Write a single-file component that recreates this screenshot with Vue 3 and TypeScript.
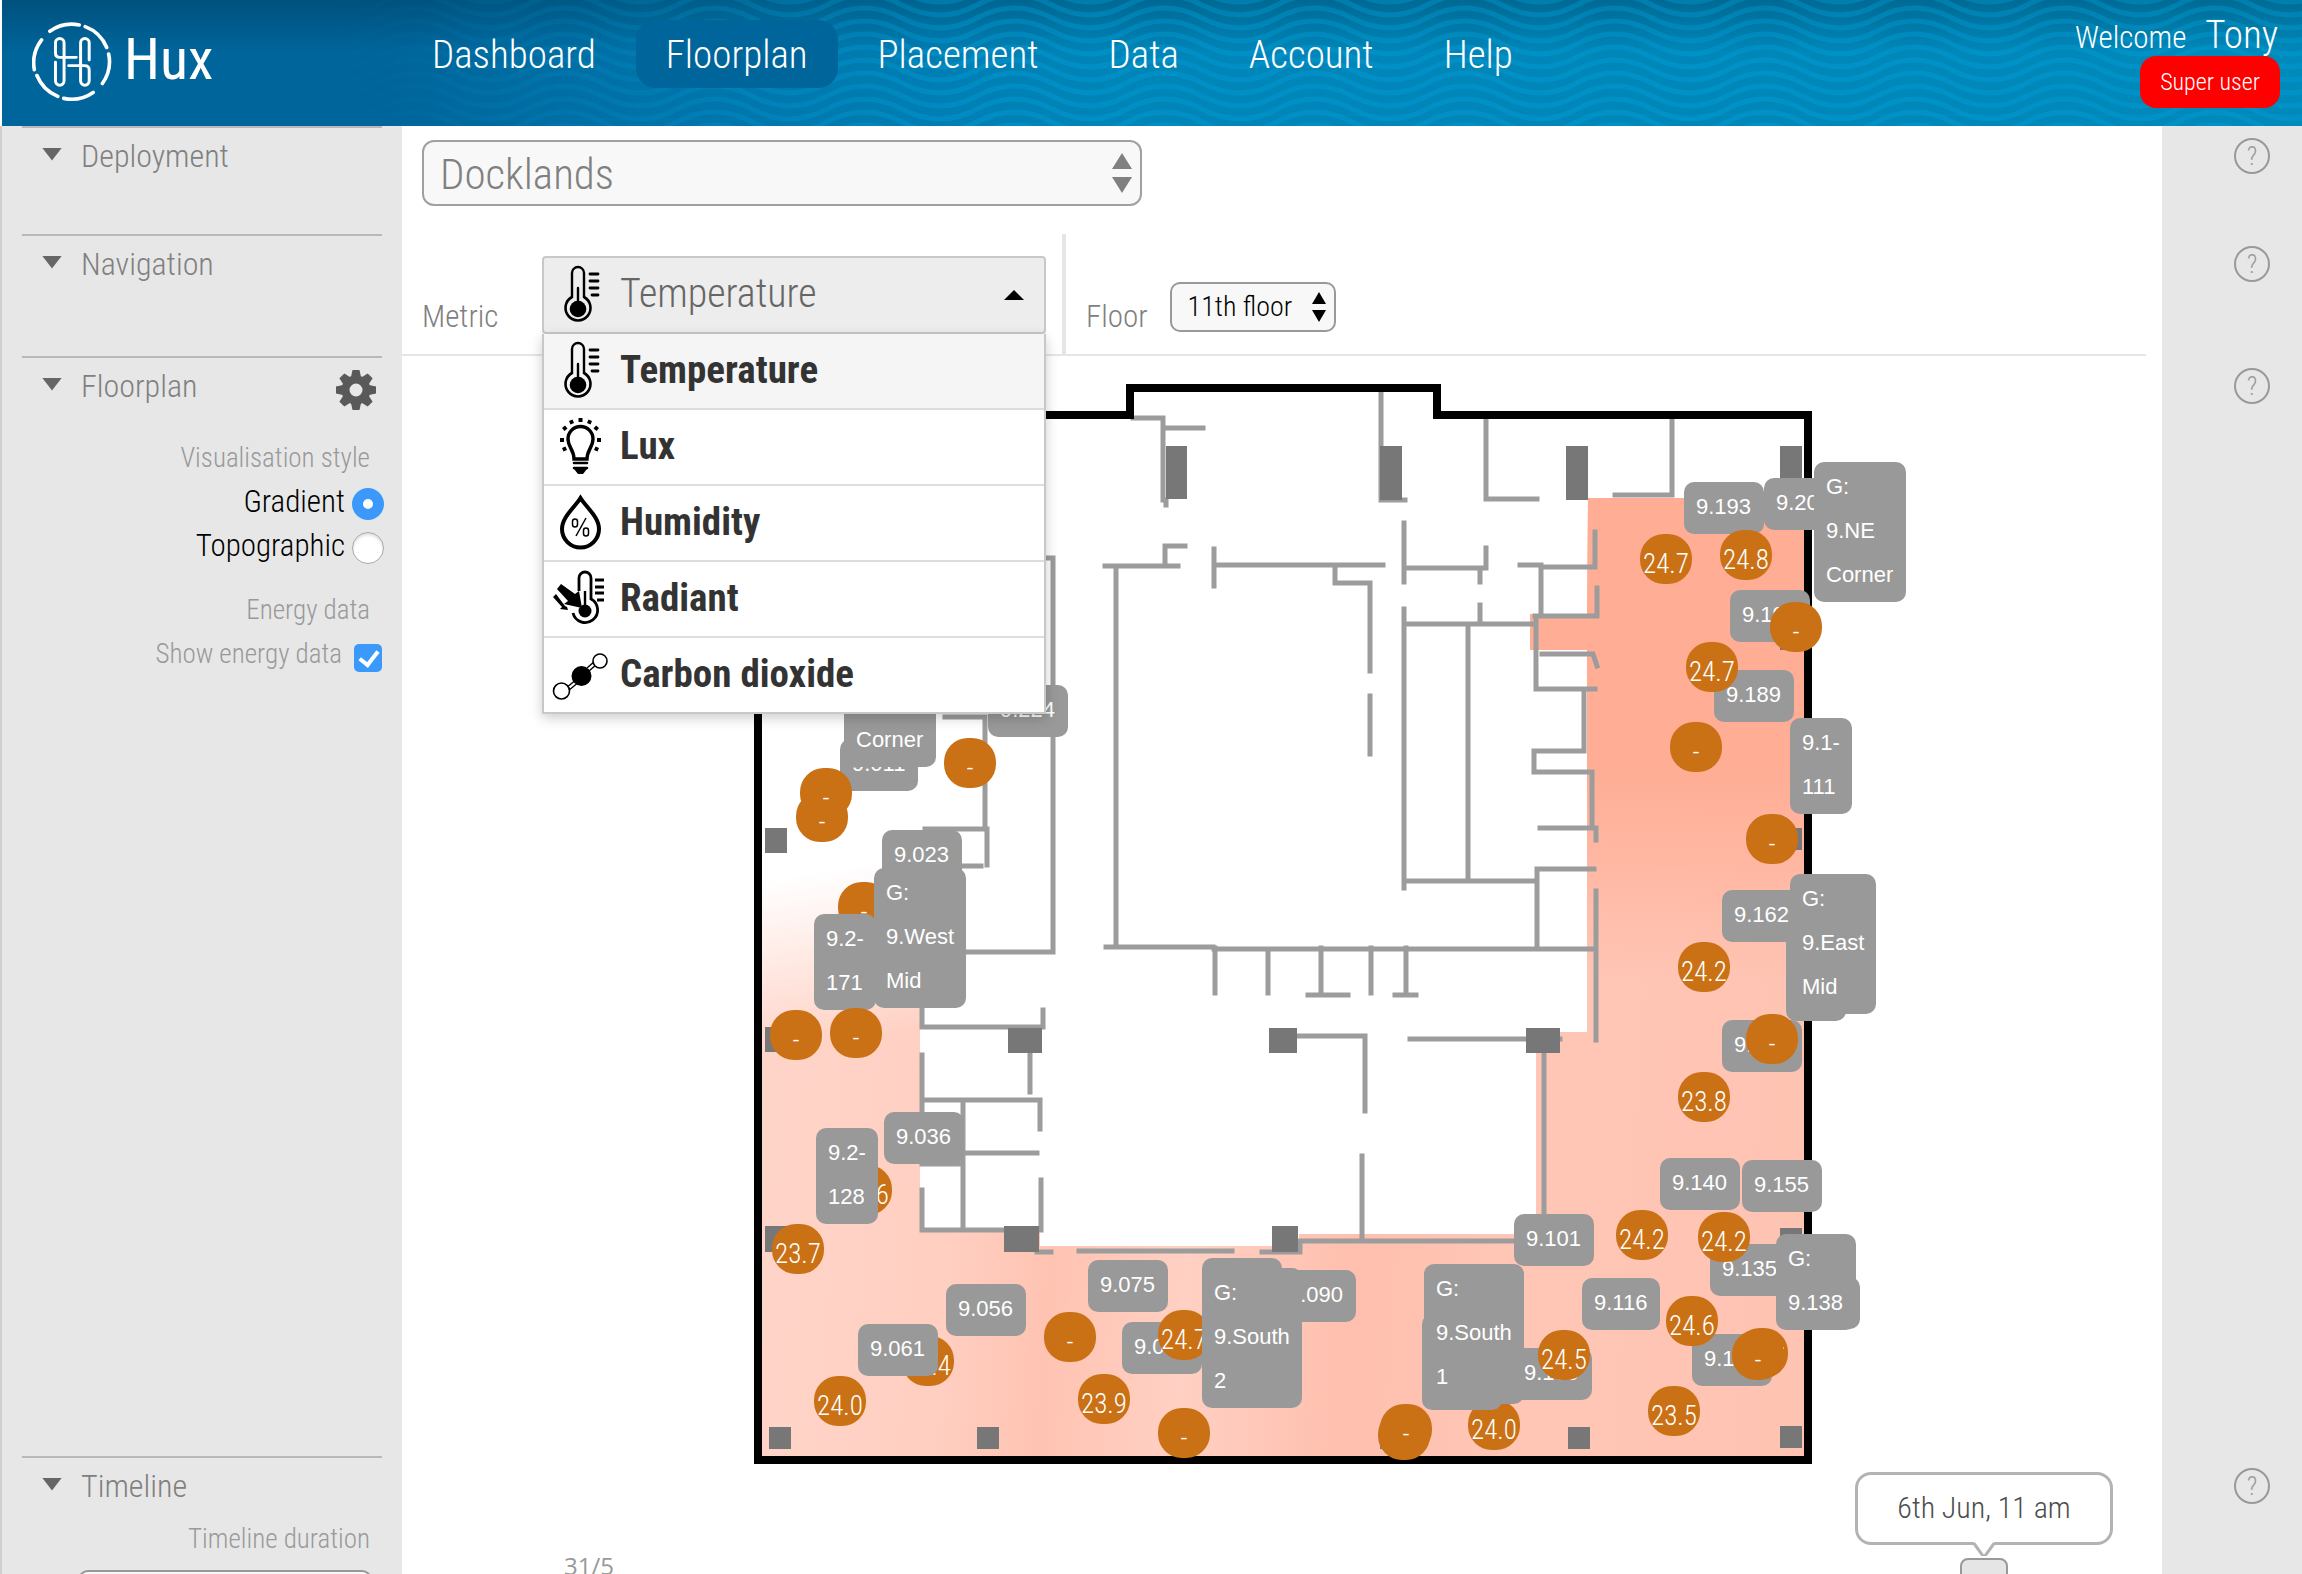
<script setup lang="ts">
import { ref } from 'vue'

interface Pin { kind: 'room' | 'sensor'; x: number; y: number; w?: number; h?: number; lines: string[] }

const navItems = ['Dashboard', 'Floorplan', 'Placement', 'Data', 'Account', 'Help']
const current = 'Floorplan'
const metrics = [
  { id: 'temperature', name: 'Temperature' },
  { id: 'lux', name: 'Lux' },
  { id: 'humidity', name: 'Humidity' },
  { id: 'radiant', name: 'Radiant' },
  { id: 'co2', name: 'Carbon dioxide' },
]
const metric = ref('temperature')
const visStyle = ref('gradient')
const showEnergy = ref(true)
const waves = Array.from({ length: 12 }, (_, i) => i * 13 - 8)

const room = (x: number, y: number, w: number, ...lines: string[]): Pin => ({
  kind: 'room', x, y, w, h: Math.max(1, lines.length) * 44 + 8, lines,
})
const sensor = (x: number, y: number, value: string): Pin => ({ kind: 'sensor', x, y, lines: [value] })

// Painted in order: later pins lie over earlier ones.
const pins: Pin[] = [
  room(1684, 482, 80, '9.193'),
  room(1764, 478, 80, '9.200'),
  room(1814, 462, 92, 'G:', '9.NE', 'Corner'),
  room(1730, 590, 80, '9.190'),
  room(1714, 670, 80, '9.189'),
  room(1790, 718, 62, '9.1-', '111'),
  room(1722, 890, 80, '9.162'),
  room(1786, 925, 60, '', ''),
  room(1790, 874, 86, 'G:', '9.East', 'Mid'),
  room(1722, 1020, 80, '9.157'),
  room(1660, 1158, 80, '9.140'),
  room(1742, 1160, 80, '9.155'),
  room(1514, 1214, 80, '9.101'),
  room(1710, 1244, 80, '9.135'),
  room(1780, 1277, 80),
  room(1776, 1234, 80, 'G:', '9.138'),
  room(1582, 1278, 78, '9.116'),
  room(1692, 1334, 80, '9.127'),
  room(1512, 1348, 80, '9.109'),
  sensor(1468, 1400, '24.0'),
  room(1422, 1314, 80, '', ''),
  room(1424, 1264, 100, 'G:', '9.South', '1'),
  room(1276, 1270, 80, '9.090'),
  room(1088, 1260, 80, '9.075'),
  room(1122, 1322, 80, '9.080'),
  sensor(1158, 1310, '24.7'),
  room(1202, 1258, 80),
  room(1220, 1268, 82),
  room(1202, 1268, 100, 'G:', '9.South', '2'),
  room(988, 685, 80, '9.224'),
  room(840, 739, 78, '9.011'),
  room(844, 627, 92, 'G:', '9.NW', 'Corner'),
  room(882, 830, 80, '9.023'),
  sensor(838, 882, '-'),
  room(814, 914, 62, '9.2-', '171'),
  room(874, 868, 92, 'G:', '9.West', 'Mid'),
  room(884, 1112, 80, '9.036'),
  sensor(840, 1165, '23.6'),
  room(816, 1128, 62, '9.2-', '128'),
  room(946, 1284, 80, '9.056'),
  sensor(902, 1336, '24.4'),
  room(858, 1324, 80, '9.061'),
  sensor(1640, 534, '24.7'),
  sensor(1720, 530, '24.8'),
  sensor(1770, 602, '-'),
  sensor(1686, 642, '24.7'),
  sensor(1670, 722, '-'),
  sensor(1746, 814, '-'),
  sensor(1678, 942, '24.2'),
  sensor(1746, 1014, '-'),
  sensor(1678, 1072, '23.8'),
  sensor(1616, 1210, '24.2'),
  sensor(1698, 1212, '24.2'),
  sensor(1666, 1296, '24.6'),
  sensor(1736, 1328, '24.7'),
  sensor(1732, 1330, '-'),
  sensor(1648, 1386, '23.5'),
  sensor(1538, 1330, '24.5'),
  sensor(1378, 1410, ''),
  sensor(1380, 1404, '-'),
  sensor(1158, 1408, '-'),
  sensor(1078, 1374, '23.9'),
  sensor(1044, 1312, '-'),
  sensor(814, 1376, '24.0'),
  sensor(772, 1224, '23.7'),
  sensor(770, 1010, '-'),
  sensor(830, 1008, '-'),
  sensor(796, 792, '-'),
  sensor(800, 768, '-'),
  sensor(944, 738, '-'),
]

const originX = 652
const originY = 356
const pinStyle = (p: Pin) => ({
  left: `${p.x - originX}px`,
  top: `${p.y - originY}px`,
  ...(p.w ? { width: `${p.w}px`, height: `${p.h}px` } : {}),
})

const walls = [
  'M1133 418H1163V500H1166V505', 'M1163 428H1203', 'M1381 390V500H1405', 'M1486 415V499H1537',
  'M1672 416V495H1615', 'M1185 546H1165V564', 'M1105 566H1178', 'M1116 566V946', 'M1106 947H1213',
  'M1214 949H1595', 'M1214 549V586', 'M1214 565H1383', 'M1335 566V583H1370V671', 'M1370 696V754',
  'M1404 523V582', 'M1404 568H1486V548', 'M1480 568V582', 'M1480 605V624', 'M1404 609V888',
  'M1404 624H1531', 'M1468 624V881', 'M1404 881H1536', 'M1215 948V993', 'M1268 951V993',
  'M1321 948V995', 'M1308 995H1348', 'M1371 948V993', 'M1406 948V995', 'M1395 995H1416',
  'M1046 558H1053V952H960', 'M945 717H985V829', 'M925 829H987V865', 'M960 866H981',
  'M922 1009V1027H1043V1010', 'M1030 1053V1092', 'M922 1055V1164H963', 'M922 1100H1040V1129',
  'M963 1100V1230', 'M963 1153H1037', 'M922 1190V1230', 'M922 1230H1006', 'M1041 1180V1230',
  'M1037 1252H1051', 'M1079 1251H1232', 'M1297 1036H1365V1111', 'M1362 1156V1239',
  'M1410 1039H1560', 'M1544 1053V1240', 'M1300 1252V1241H1544', 'M1262 1252H1300', 'M1596 891V1040',
  'M1595 532V567H1541', 'M1520 565H1541V616', 'M1597 588V616H1535', 'M1536 616V689H1595',
  'M1542 654H1593L1597 666', 'M1584 689V751H1534V772H1592V828', 'M1540 828H1596V840',
  'M1594 869H1537V947',
].join('')

const columns = [
  [1166, 446, 21, 53], [1380, 446, 22, 54], [1566, 446, 22, 54], [1780, 446, 22, 54],
  [1780, 630, 22, 20], [1780, 828, 22, 22], [765, 828, 22, 25], [765, 1027, 22, 25],
  [765, 1226, 22, 26], [769, 1427, 22, 22], [977, 1427, 22, 22], [1380, 1427, 22, 22],
  [1568, 1427, 22, 22], [1780, 1426, 22, 22], [1780, 1228, 22, 25], [1008, 1028, 34, 25],
  [1004, 1226, 35, 26], [1269, 1028, 28, 25], [1526, 1028, 34, 25], [1272, 1226, 26, 26],
]
const helpTopics = ['Deployment', 'Navigation', 'Floorplan', 'Timeline']
</script>

<template>
  <div class="app">
    <svg class="defs" aria-hidden="true">
      <defs>
        <symbol id="ic-temperature" viewBox="0 0 60 60">
          <path d="M20 33V8a6 6 0 0 1 12 0V33" fill="none" stroke="#000" stroke-width="2.4" />
          <path d="M20 32a12.5 12.5 0 1 0 12 0" fill="none" stroke="#000" stroke-width="2.6" />
          <circle cx="26" cy="44" r="8.3" /><path d="M26 44V23" stroke="#000" stroke-width="2.4" stroke-linecap="round" />
          <path d="M38 9h8M38 16h8M38 23h8M40 30h6" stroke="#000" stroke-width="2.8" stroke-linecap="round" />
        </symbol>
        <symbol id="ic-lux" viewBox="0 0 60 60">
          <path d="M22 42c0-9-6-12-6-20a12.500 12.500 0 0 1 25 0c0 8-6 11-6 20z" fill="none" stroke="#000" stroke-width="3.4" />
          <path d="M22 46h13M22 51h13" stroke="#000" stroke-width="2.600" stroke-linecap="round" />
          <path d="M22 52h13l-4 5h-5z" />
          <path d="M26.500 1h4v4h-4zM8 21h4v4H8zM45 21h4v4h-4z" />
          <path d="M17 4l3.500-1.500 1.500 3.500-3.500 1.500zM40 4l-3.500-1.500L35 6l3.500 1.500zM10 11l3-2.500 2.500 3-3 2.500zM47 11l-3-2.500-2.500 3 3 2.500zM10 31l3.500-1.500L15 33l-3.500 1.500zM47 31l-3.500-1.500L42 33l3.500 1.500z" />
        </symbol>
        <symbol id="ic-humidity" viewBox="0 0 60 60">
          <path d="M28.500 5C23 14 10 24 10 36a18.500 18.500 0 0 0 37 0C47 24 34 14 28.500 5z" fill="none" stroke="#000" stroke-width="4" />
          <path d="M34 25L24 43" stroke="#000" stroke-width="1.500" />
          <rect x="20.500" y="26" width="5" height="8" rx="2.500" fill="none" stroke="#000" stroke-width="1.500" />
          <rect x="31.500" y="35" width="5" height="8" rx="2.500" fill="none" stroke="#000" stroke-width="1.500" />
        </symbol>
        <symbol id="ic-radiant" viewBox="0 0 60 60">
          <path d="M27 22V9a6 6 0 0 1 12 0V31" fill="none" stroke="#000" stroke-width="2.800" />
          <path d="M39 30a12.500 12.500 0 1 1-18 14" fill="none" stroke="#000" stroke-width="2.800" />
          <circle cx="33" cy="42" r="6.500" /><path d="M33 42V22" stroke="#000" stroke-width="2.400" />
          <path d="M43 11h9M43 18h9M43 24h9M45 31h7" stroke="#000" stroke-width="2.800" />
          <path d="M9 15l-4 5 11 12-4 3 18 4-3-17-4 3z" />
          <path d="M4 25l-3 3 9 10-2 2 8 1-1-3-2-1z" />
        </symbol>
        <symbol id="ic-co2" viewBox="0 0 60 60">
          <path d="M14 43l11-9M16 46l12-10M35 23l8-7M37 26l8-7" stroke="#000" stroke-width="1.400" />
          <circle cx="29.500" cy="31" r="10" />
          <circle cx="9.500" cy="46" r="8" fill="#fff" stroke="#000" stroke-width="1.600" />
          <circle cx="48" cy="16" r="7" fill="#fff" stroke="#000" stroke-width="1.600" />
        </symbol>
      </defs>
    </svg>

    <header class="top">
      <svg class="waves" aria-hidden="true">
        <defs>
          <linearGradient id="fade"><stop offset="0.14" stop-color="#000" /><stop offset="0.42" stop-color="#fff" /></linearGradient>
          <mask id="fade-mask"><rect width="100%" height="100%" fill="url(#fade)" /></mask>
          <pattern id="wave" width="150" height="126" patternUnits="userSpaceOnUse">
            <path v-for="y in waves" :key="y" :d="`M-75 ${y}q37 -20 75 0t75 0t75 0t75 0`" />
          </pattern>
        </defs>
        <rect width="100%" height="100%" fill="url(#wave)" mask="url(#fade-mask)" />
      </svg>
      <a class="brand" href="#" aria-label="Hux home">
        <svg viewBox="36 36 242 242" fill="none" stroke="#fff" stroke-linecap="round" aria-hidden="true">
          <g stroke-width="11">
            <path d="M90 64A114 114 0 0 1 179 45M197 50A114 114 0 0 1 262 113M268 133A114 114 0 0 1 249 222M221 249A114 114 0 0 1 132 267M114 261A114 114 0 0 1 51 198M43 180A114 114 0 0 1 65 90" />
          </g>
          <g stroke-width="9">
            <path d="M170 143H120Q107 143 107 130V99a13 13 0 0 1 26 0V214a13 13 0 0 1-26 0V158" />
            <path d="M147 168H195Q209 168 209 181V214a13 13 0 0 1-26 0V99a13 13 0 0 1 26 0V151" />
          </g>
        </svg>
        <span>Hux</span>
      </a>
      <nav class="nav">
        <a v-for="n in navItems" :key="n" href="#" :class="{ on: n === current }">{{ n }}</a>
      </nav>
      <div class="user">
        <p>Welcome <a href="#">Tony</a></p>
        <span class="role">Super user</span>
      </div>
    </header>

    <div class="body">
      <aside class="side">
        <section class="short">
          <h2><i class="tri" />Deployment</h2>
        </section>
        <section class="mid">
          <h2><i class="tri" />Navigation</h2>
        </section>
        <section class="grow">
          <h2><i class="tri" />Floorplan
            <button class="gear" type="button" aria-label="Floorplan settings">
              <svg viewBox="-20 -20 40 40" aria-hidden="true">
                <circle r="10.500" fill="none" stroke="#595959" stroke-width="8" />
                <path v-for="a in 8" :key="a" :transform="`rotate(${a * 45})`" d="M-5-13L-3.500-20H3.500L5-13z" fill="#595959" />
              </svg>
            </button>
          </h2>
          <fieldset>
            <legend class="cap">Visualisation style</legend>
            <label class="opt">Gradient<input v-model="visStyle" type="radio" name="vis" value="gradient"></label>
            <label class="opt">Topographic<input v-model="visStyle" type="radio" name="vis" value="topographic"></label>
          </fieldset>
          <p class="cap energy">Energy data</p>
          <label class="opt check">Show energy data<input v-model="showEnergy" type="checkbox"></label>
        </section>
        <section class="last">
          <h2><i class="tri" />Timeline</h2>
          <label class="cap" for="duration">Timeline duration</label>
          <select id="duration" class="duration"><option /></select>
        </section>
      </aside>

      <main class="main">
        <div class="site">
          <select aria-label="Site"><option>Docklands</option></select>
          <svg class="updown" viewBox="0 0 20 40" aria-hidden="true"><path d="M10 0L20 16H0zM10 40L20 24H0z" /></svg>
        </div>

        <div class="filters">
          <div class="metric">
            <span id="metric-label" class="lbl">Metric</span>
            <div class="drop">
              <button class="trigger" type="button" aria-haspopup="listbox" aria-expanded="true" aria-labelledby="metric-label">
                <svg class="ic" aria-hidden="true"><use href="#ic-temperature" /></svg><span>Temperature</span><i class="caret" />
              </button>
              <ul class="menu" role="listbox" aria-labelledby="metric-label">
                <li v-for="m in metrics" :key="m.id" role="option" :aria-selected="m.id === metric" :class="{ on: m.id === metric }" @click="metric = m.id">
                  <svg class="ic" aria-hidden="true"><use :href="`#ic-${m.id}`" /></svg><span>{{ m.name }}</span>
                </li>
              </ul>
            </div>
          </div>
          <div class="floor">
            <label class="lbl" for="floor">Floor</label>
            <div class="pick">
              <select id="floor"><option>11th floor</option></select>
              <svg class="updown" viewBox="0 0 14 30" aria-hidden="true"><path d="M7 0L14 12H0zM7 30L14 18H0z" /></svg>
            </div>
          </div>
        </div>

        <div class="stage">
          <div class="plan">
            <svg viewBox="652 356 1260 1116" aria-label="11th floor plan" role="img">
              <defs>
                <linearGradient id="base" gradientUnits="userSpaceOnUse" x1="762" y1="1200" x2="1804" y2="1270">
                  <stop offset="0" stop-color="#ffd4c8" /><stop offset="0.18" stop-color="#ffcfc1" />
                  <stop offset="0.28" stop-color="#ffc3b2" /><stop offset="0.41" stop-color="#ffd0c3" />
                  <stop offset="0.57" stop-color="#ffbfae" /><stop offset="0.72" stop-color="#ffc6b6" />
                  <stop offset="1" stop-color="#ffc3b2" />
                </linearGradient>
                <linearGradient id="warm" x1="0" y1="0" x2="0" y2="1">
                  <stop offset="0" stop-color="#ffad95" /><stop offset="0.56" stop-color="#ffad95" />
                  <stop offset="1" stop-color="#ffad95" stop-opacity="0" />
                </linearGradient>
                <linearGradient id="cool" gradientUnits="userSpaceOnUse" x1="830" y1="870" x2="855" y2="1040">
                  <stop offset="0" stop-color="#fff" /><stop offset="1" stop-color="#fff" stop-opacity="0" />
                </linearGradient>
              </defs>
              <path d="M1588 498H1804V1456H762V840H920V1228H1040V1246H1299V1234H1536V1032H1587V650H1530V614H1587z" fill="url(#base)" />
              <path d="M1588 498H1804V980H1587V650H1530V614H1587z" fill="url(#warm)" />
              <path d="M762 840H921V1050H762z" fill="url(#cool)" />
              <path :d="walls" fill="none" stroke="#9c9c9c" stroke-width="5" stroke-linecap="square" />
              <rect v-for="(c, i) in columns" :key="i" :x="c[0]" :y="c[1]" :width="c[2]" :height="c[3]" fill="#777" />
              <path d="M758 415H1130V388H1437V415H1808V1460H758z" fill="none" stroke="#000" stroke-width="8" />
            </svg>
            <div v-for="(p, i) in pins" :key="i" :class="p.kind" :style="pinStyle(p)">
              <span v-for="(l, j) in p.lines" :key="j">{{ l }}</span>
            </div>
          </div>
        </div>

        <div class="timeline">
          <span class="tick">31/5</span>
          <div class="marker">
            <output>6th Jun, 11 am</output>
            <svg viewBox="0 0 26 14" aria-hidden="true"><path d="M3 0L13 14L23 0z" fill="#fff" /><path d="M3 1.500L12 14H14L23 1.500" fill="none" stroke="#b3b3b3" stroke-width="3" /></svg>
            <button type="button" aria-label="Timeline position" />
          </div>
        </div>
      </main>

      <aside class="rail">
        <div v-for="h in helpTopics" :key="h" :class="h.toLowerCase()">
          <button type="button" :aria-label="`Help: ${h}`">?</button>
        </div>
      </aside>
    </div>
  </div>
</template>

<style>
body { margin: 0; }
</style>

<style scoped>
* { box-sizing: border-box; }
.app { height: 100vh; min-height: 900px; overflow: hidden; display: flex; flex-direction: column; background: #fff; font: 300 30px/40px "Roboto Condensed", Roboto, sans-serif; color: #808080; }
h2, p, ul, fieldset, legend { margin: 0; padding: 0; border: 0; font: inherit; list-style: none; }
button, select, input { font: inherit; margin: 0; }
a { color: inherit; text-decoration: none; }
.defs { position: absolute; width: 0; height: 0; }

.top { position: relative; flex: none; height: 126px; display: flex; margin-left: 2px; color: #fff; background: linear-gradient(rgba(0, 30, 50, .28), rgba(0, 30, 50, 0) 42%), linear-gradient(90deg, #00659b 17%, #0073a9 28%, #0085b9 48%, #0089bb); }
.waves { position: absolute; inset: 0; width: 100%; height: 100%; }
.waves path { fill: none; stroke: #00a3dc; stroke-width: 5; stroke-opacity: .35; }
.brand, .nav, .user { position: relative; }
.brand { width: 400px; flex: none; padding: 22px 0 0 30px; display: flex; gap: 12px; }
.brand svg { width: 80px; height: 80px; }
.brand span { font-size: 58px; line-height: 74px; font-weight: 400; }
.nav { display: flex; gap: 10px; padding-top: 20px; font-size: 39px; }
.nav a { height: 68px; padding: 0 30px; line-height: 70px; border-radius: 20px; }
.nav .on { background: #00659b; }
.user { margin-left: auto; padding: 10px 22px 0 0; display: flex; flex-direction: column; align-items: flex-end; }
.user p { height: 46px; line-height: 50px; padding-right: 2px; font-size: 31px; }
.user p a { font-size: 39px; margin-left: 12px; }
.role { height: 52px; line-height: 52px; padding: 0 20px; font-size: 24px; background: #f00; border-radius: 16px; }

.body { flex: 1; min-height: 0; display: flex; }
.side { width: 402px; flex: none; display: flex; flex-direction: column; background: #e7e7e7; border-left: 2px solid #cfcfcf; padding: 0 20px; }
.side section { border-top: 2px solid #b9b9b9; position: relative; flex: none; }
.side .short { min-height: 108px; }
.side .mid { min-height: 122px; }
.side .grow { flex: 1; }
.side .last { height: 118px; overflow: hidden; text-align: right; }
h2 { display: flex; align-items: center; height: 40px; margin-top: 8px; font-size: 32px; }
.tri { width: 20px; height: 13px; margin: 0 19px 4px 20px; background: #666; clip-path: polygon(0 0, 100% 0, 50% 100%); }
.gear { margin: 8px 6px 0 auto; width: 40px; height: 40px; padding: 0; border: 0; background: none; }
.gear svg { display: block; width: 40px; height: 40px; }
.cap { display: block; width: 100%; padding-right: 12px; text-align: right; font-size: 27px; color: #999; }
fieldset { padding-top: 32px; min-width: 0; }
fieldset legend { float: left; margin-bottom: 2px; }
.opt { clear: both; display: flex; align-items: center; justify-content: flex-end; gap: 7px; height: 44px; margin-right: -2px; font-size: 31px; color: #000; }
.opt input { appearance: none; width: 32px; height: 32px; border-radius: 50%; background: #fff; border: 1px solid #aaa; box-shadow: inset 0 2px 3px rgba(0, 0, 0, .15); margin-top: 4px; }
.opt input[type="radio"]:checked { border: 11px solid #3b99fc; box-shadow: none; }
.energy { margin-top: 22px; }
.check { gap: 12px; margin: 4px 0 0; height: 40px; font-size: 27px; color: #999; }
.check input { width: 28px; height: 28px; border-radius: 5px; border: 0; margin-top: 8px; box-shadow: none; }
.check input:checked { background: #3b99fc; position: relative; }
.check input:checked::after { content: ""; position: absolute; left: 9px; top: 3px; width: 8px; height: 15px; border: solid #fff; border-width: 0 4px 4px 0; transform: rotate(38deg); }
.last .cap { margin-top: 13px; }
.duration { appearance: none; width: 294px; height: 48px; margin: 11px 10px 0 0; border: 2px solid #999; border-radius: 10px; background: #f8f8f8; }

.main { flex: 1; min-width: 0; display: flex; flex-direction: column; }
.site { position: relative; width: 720px; height: 66px; margin: 14px 0 28px 20px; }
.site select { appearance: none; width: 100%; height: 100%; padding: 2px 16px 0; border: 2px solid #a0a0a0; border-radius: 12px; background: #f8f8f8; color: #808080; font-size: 43px; }
.updown { position: absolute; pointer-events: none; }
.site .updown { right: 10px; top: 13px; width: 20px; height: 40px; fill: #808080; }
.filters { display: flex; height: 122px; margin-right: 16px; border-bottom: 2px solid #e5e5e5; }
.metric { display: flex; width: 664px; border-right: 4px solid #e5e5e5; padding-left: 20px; }
.lbl { line-height: 40px; padding-top: 63px; height: 103px; font-size: 31px; }
.metric .lbl { width: 120px; }
.drop { position: relative; width: 504px; margin-top: 22px; z-index: 5; font-size: 39px; }
.drop span { padding-bottom: 3px; }
.trigger { display: flex; align-items: center; width: 100%; height: 78px; padding: 0 20px 0 8px; border: 2px solid #c8c8c8; border-radius: 4px; background: #ededed; color: #666; text-align: left; font-size: 40px; }
.ic { width: 60px; height: 60px; margin-right: 8px; flex: none; }
.caret { margin-left: auto; width: 20px; height: 10px; background: #000; clip-path: polygon(0 100%, 50% 0, 100% 100%); }
.menu { position: absolute; top: 78px; left: 0; width: 100%; background: #fff; border: 2px solid #c8c8c8; border-top: 0; box-shadow: 0 4px 12px rgba(0, 0, 0, .2); font-size: 39px; font-weight: 700; color: #333; }
.menu li { display: flex; align-items: center; height: 76px; padding-left: 8px; border-bottom: 2px solid #ddd; }
.menu li:last-child { height: 74px; border-bottom: 0; }
.menu .on { background: #f5f5f5; }
.floor { display: flex; padding-left: 20px; gap: 22px; }
.pick { position: relative; width: 166px; height: 50px; margin-top: 48px; }
.pick select { appearance: none; width: 100%; height: 100%; padding: 0 16px; border: 2px solid #999; border-radius: 10px; background: #f8f8f8; color: #000; font-size: 28px; }
.pick .updown { right: 10px; top: 10px; width: 14px; height: 30px; fill: #000; }

.stage { flex: 1; min-height: 0; display: flex; justify-content: center; }
.plan { position: relative; width: 1260px; height: 1116px; flex: none; }
.plan > svg { display: block; width: 100%; height: 100%; }
.room, .sensor { position: absolute; color: #fff; }
.room { padding: 3px 12px; border-radius: 10px; background: #999; font: 22px/44px "Liberation Sans", Arial, sans-serif; }
.room span { display: block; white-space: nowrap; }
.sensor { width: 52px; height: 50px; border-radius: 24px; background: #ca7116; text-align: center; font-size: 27px; line-height: 61px; font-weight: 300; }

.timeline { flex: none; height: 102px; display: flex; justify-content: space-between; padding: 0 49px 0 162px; overflow: hidden; }
.tick { padding-top: 78px; font: 24px/32px "Open Sans", sans-serif; color: #999; }
.marker { display: flex; flex-direction: column; align-items: center; width: 258px; }
.marker output { flex: none; width: 100%; height: 73px; line-height: 66px; border: 3px solid #b3b3b3; border-radius: 16px; text-align: center; font-size: 30px; color: #4d4d4d; }
.marker svg { flex: none; width: 26px; height: 14px; margin-top: -3px; position: relative; }
.marker button { width: 48px; height: 40px; margin-top: 2px; flex: none; border: 2px solid #999; border-radius: 8px; background: #e5e5e5; }

.rail { width: 140px; flex: none; display: flex; flex-direction: column; background: #e7e7e7; }
.rail div { padding: 12px 0 0 72px; flex: none; height: 108px; }
.rail .navigation { height: 122px; }
.rail .floorplan { flex: 1; }
.rail .timeline { height: 118px; display: block; }
.rail button { display: block; width: 36px; height: 36px; padding: 0; border: 2px solid #999; border-radius: 50%; background: none; color: #999; font-size: 26px; line-height: 32px; text-align: center; }
</style>
